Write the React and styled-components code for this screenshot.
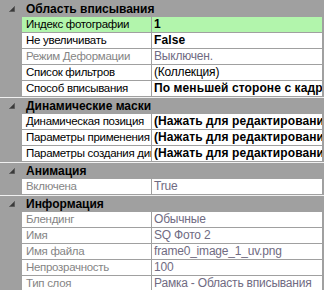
import React from 'react';
import styled, { createGlobalStyle } from 'styled-components';

const GlobalStyle = createGlobalStyle`
  html, body {
    margin: 0;
    padding: 0;
    background: #a0a0a0;
  }
  body {
    font-family: "Liberation Sans", Arial, sans-serif;
    font-size: 12px;
  }
`;

const Grid = styled.div`
  width: 324px;
  height: 290px;
  overflow: hidden;
  background: #a0a0a0;
  display: flex;
  flex-direction: column;
`;

const CategoryRow = styled.div`
  display: flex;
  align-items: center;
  height: ${(props) => (props.first ? '17px' : '16px')};
  border-top: ${(props) => (props.first ? 'none' : '1px solid #f0f0f0')};
  flex-shrink: 0;
`;

const Toggle = styled.span`
  width: 22px;
  height: 100%;
  display: flex;
  align-items: center;
  justify-content: center;
  padding-left: 1px;
  box-sizing: border-box;
`;

const CategoryTitle = styled.span`
  font-weight: bold;
  color: #000;
  padding-left: 4px;
  white-space: nowrap;
`;

const PropRow = styled.div`
  display: flex;
  height: 15px;
  border-bottom: 1px solid #a0a0a0;
  padding-left: 22px;
  padding-right: 2px;
  flex-shrink: 0;
`;

const NameCell = styled.div`
  width: 130px;
  flex-shrink: 0;
  border-right: 1px solid #a0a0a0;
  background: ${(props) => (props.selected ? '#b2f5ac' : '#fff')};
  color: ${(props) => (props.muted ? '#858585' : '#000')};
  padding-left: 4px;
  box-sizing: border-box;
  font-size: 11.5px;
  line-height: 15px;
  letter-spacing: -0.3px;
  white-space: nowrap;
  overflow: hidden;
  text-overflow: clip;
`;

const ValueCell = styled.div`
  flex: 1;
  min-width: 0;
  background: ${(props) => (props.selected ? '#b2f5ac' : '#fff')};
  color: ${(props) => (props.muted ? '#706b82' : '#000')};
  font-weight: ${(props) => (props.bold ? 'bold' : 'normal')};
  letter-spacing: ${(props) => (props.bold ? '0.1px' : '-0.2px')};
  padding-left: 2px;
  line-height: 15px;
  white-space: nowrap;
  overflow: hidden;
  text-overflow: clip;
`;

const ExpandedGlyph = () => (
  <svg width="6" height="6" viewBox="0 0 6 6">
    <polygon points="5.5,0.5 5.5,5.5 0.5,5.5" fill="#3a3a3a" stroke="#5a5a5a" strokeWidth="1" />
  </svg>
);

const Category = ({ title, first }) => (
  <CategoryRow first={first}>
    <Toggle>
      <ExpandedGlyph />
    </Toggle>
    <CategoryTitle>{title}</CategoryTitle>
  </CategoryRow>
);

const Property = ({ name, value, selected, mutedName, mutedValue, bold }) => (
  <PropRow>
    <NameCell selected={selected} muted={mutedName}>{name}</NameCell>
    <ValueCell selected={selected} muted={mutedValue} bold={bold}>{value}</ValueCell>
  </PropRow>
);

const groups = [
  {
    title: 'Область вписывания',
    items: [
      { name: 'Индекс фотографии', value: '1', selected: true, bold: true },
      { name: 'Не увеличивать', value: 'False', bold: true },
      { name: 'Режим Деформации', value: 'Выключен.', mutedName: true, mutedValue: true },
      { name: 'Список фильтров', value: '(Коллекция)' },
      { name: 'Способ вписывания', value: 'По меньшей стороне с кадром', bold: true },
    ],
  },
  {
    title: 'Динамические маски',
    items: [
      { name: 'Динамическая позиция', value: '(Нажать для редактирования)', bold: true },
      { name: 'Параметры применения', value: '(Нажать для редактирования)', bold: true },
      { name: 'Параметры создания динамической маски', value: '(Нажать для редактирования)', bold: true },
    ],
  },
  {
    title: 'Анимация',
    items: [{ name: 'Включена', value: 'True', mutedName: true, mutedValue: true }],
  },
  {
    title: 'Информация',
    items: [
      { name: 'Блендинг', value: 'Обычные', mutedName: true, mutedValue: true },
      { name: 'Имя', value: 'SQ Фото 2', mutedName: true, mutedValue: true },
      { name: 'Имя файла', value: 'frame0_image_1_uv.png', mutedName: true, mutedValue: true },
      { name: 'Непрозрачность', value: '100', mutedName: true, mutedValue: true },
      { name: 'Тип слоя', value: 'Рамка - Область вписывания', mutedName: true, mutedValue: true },
    ],
  },
];

const App = () => (
  <>
    <GlobalStyle />
    <Grid>
      {groups.map((group, gi) => (
        <React.Fragment key={group.title}>
          <Category title={group.title} first={gi === 0} />
          {group.items.map((item) => (
            <Property key={item.name} {...item} />
          ))}
        </React.Fragment>
      ))}
    </Grid>
  </>
);

export default App;
